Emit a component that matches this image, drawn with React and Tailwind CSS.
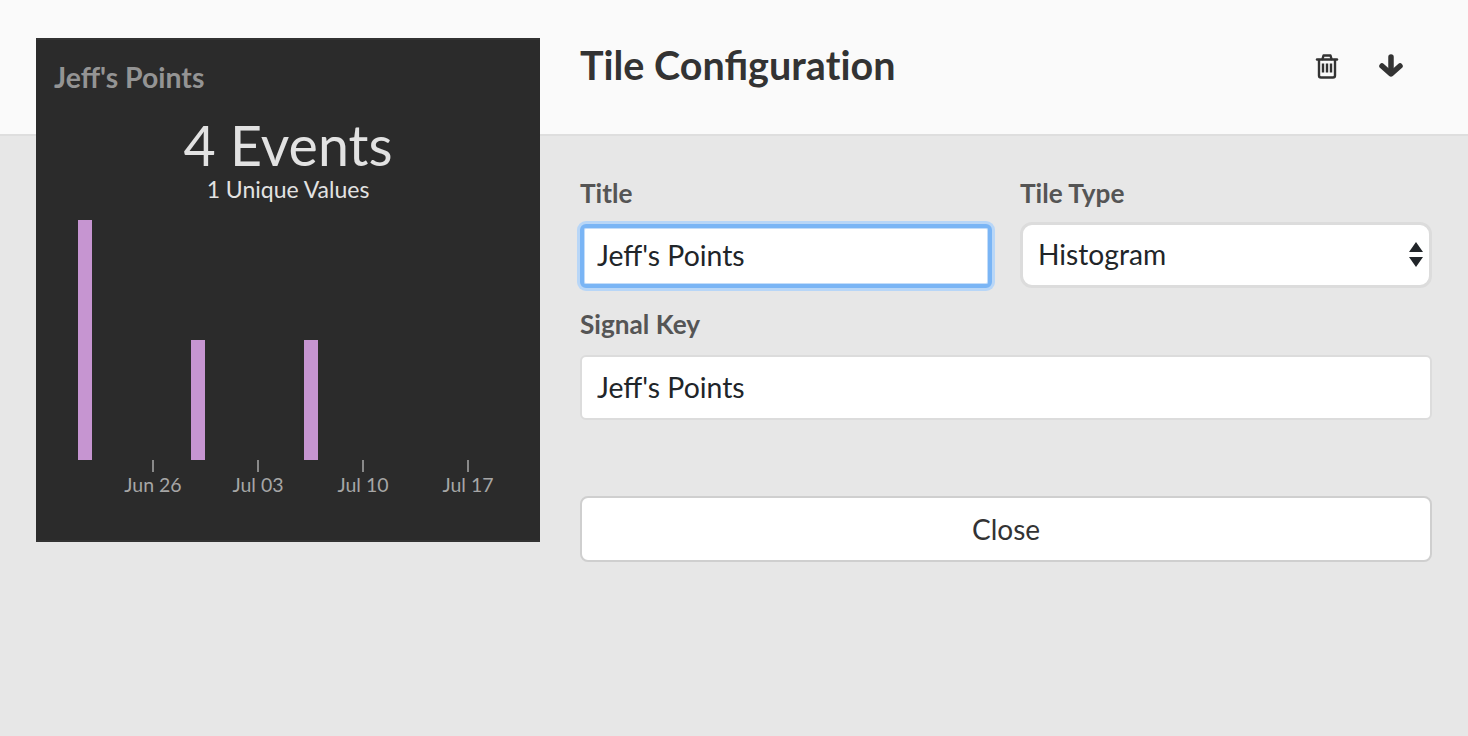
const BARS = [
  { x: 42, top: 182 },
  { x: 155, top: 302 },
  { x: 268, top: 302 },
]

const TICKS = [
  { x: 117, label: 'Jun 26' },
  { x: 222, label: 'Jul 03' },
  { x: 327, label: 'Jul 10' },
  { x: 432, label: 'Jul 17' },
]

function TrashIcon() {
  return (
    <svg width="24" height="26" viewBox="0 0 24 26" fill="none" stroke="#333" strokeWidth="2.4" strokeLinecap="round" strokeLinejoin="round">
      <path d="M2 6.5 H22" />
      <path d="M7.5 6 L8.5 2.5 H15.5 L16.5 6" />
      <path d="M4 7 V22.5 A2 2 0 0 0 6 24.5 H18 A2 2 0 0 0 20 22.5 V7" />
      <path d="M8 10.5 V19.5 M12 10.5 V19.5 M16 10.5 V19.5" strokeLinecap="butt" />
    </svg>
  )
}

function ArrowIcon() {
  return (
    <svg width="28" height="28" viewBox="0 0 28 28" fill="none" stroke="#333" strokeWidth="5.5" strokeLinecap="round" strokeLinejoin="round">
      <path d="M14 5 V21" />
      <path d="M5 14 L14 22 L23 14" />
    </svg>
  )
}

function Chart() {
  return (
    <svg width="504" height="322" className="block font-['Lato',sans-serif]">
      {BARS.map(b => (
        <rect key={b.x} x={b.x} y={b.top - 160} width="14" height={422 - b.top} fill="#c695d1" />
      ))}
      {TICKS.map(t => (
        <g key={t.x}>
          <line x1={t.x} x2={t.x} y1="262" y2="274" stroke="#aaa" strokeWidth="1.5" />
          <text x={t.x} y="294" textAnchor="middle" fontSize="19.5" fill="#a6a6a6">{t.label}</text>
        </g>
      ))}
    </svg>
  )
}

function TileCard() {
  return (
    <div className="absolute left-[36px] top-[38px] w-[504px] h-[504px] bg-[#2b2b2b] border-t-2 border-b-2 border-[#333] flex flex-col">
      <div className="pl-[18px] pt-[20px] text-[28.4px] leading-[34px] font-bold text-[#949494]">Jeff's Points</div>
      <div className="text-center text-[#e2e2e2] text-[55.5px] leading-[60px] mt-[21px]">4 Events</div>
      <div className="text-center text-[#e2e2e2] text-[23px] leading-[28px]">1 Unique Values</div>
      <div className="-mt-[5px]"><Chart /></div>
    </div>
  )
}

export default function App() {
  return (
    <div className="relative w-[1468px] h-[736px] overflow-hidden bg-[#e7e7e7] font-['Lato',sans-serif]">
      <header className="h-[136px] bg-[#fafafa] border-b-2 border-[#dedede] pl-[580px] pr-[63px] flex items-center justify-between">
        <h1 className="text-[39.5px] font-bold text-[#333] -mt-[5px]">
          Tile Configura<span className="[font-variant-ligatures:none]">tion</span>
        </h1>
        <div className="flex items-center gap-[38px] -mt-[2px]">
          <TrashIcon />
          <ArrowIcon />
        </div>
      </header>

      <TileCard />

      <div className="pl-[580px] pr-[36px] pt-[40px] flex flex-col">
        <div className="flex gap-[28px]">
          <label className="flex-1 flex flex-col">
            <span className="text-[26.2px] leading-[34px] font-bold text-[#555]">Title</span>
            <input
              readOnly
              value="Jeff's Points"
              className="mt-[14px] h-[64px] rounded-[6px] bg-white border-[4px] border-[#7ab5f5] shadow-[0_0_0_3px_#b8d6f7,inset_0_0_0_1px_#c4ddf9] pl-[13px] pr-[13px] pb-[2px] text-[28.4px] text-[#212529] outline-none"
            />
          </label>
          <label className="flex-1 flex flex-col">
            <span className="text-[26.2px] leading-[34px] font-bold text-[#555]">Tile Type</span>
            <div className="relative mt-[12px] h-[66px] rounded-[12px] bg-white border-[3px] border-[#dcdcdc] pl-[15px] pb-[2px] flex items-center text-[28.2px] text-[#212529]">
              Histogram
              <svg width="14" height="26" viewBox="0 0 14 26" className="absolute right-[6px] top-[17px]">
                <path d="M7 0 L14 10 L0 10 Z M0 15 L14 15 L7 25 Z" fill="#212529" />
              </svg>
            </div>
          </label>
        </div>

        <label className="flex flex-col mt-[19px]">
          <span className="text-[26.2px] leading-[34px] font-bold text-[#555]">Signal Key</span>
          <input
            readOnly
            value="Jeff's Points"
            className="mt-[14px] h-[65px] rounded-[6px] bg-white border-2 border-[#dcdcdc] px-[15px] pb-[2px] text-[28.4px] text-[#212529] outline-none"
          />
        </label>

        <button className="mt-[76px] h-[66px] rounded-[8px] bg-white border-2 border-[#cfcfcf] text-[28px] text-[#333]">
          Close
        </button>
      </div>
    </div>
  )
}
